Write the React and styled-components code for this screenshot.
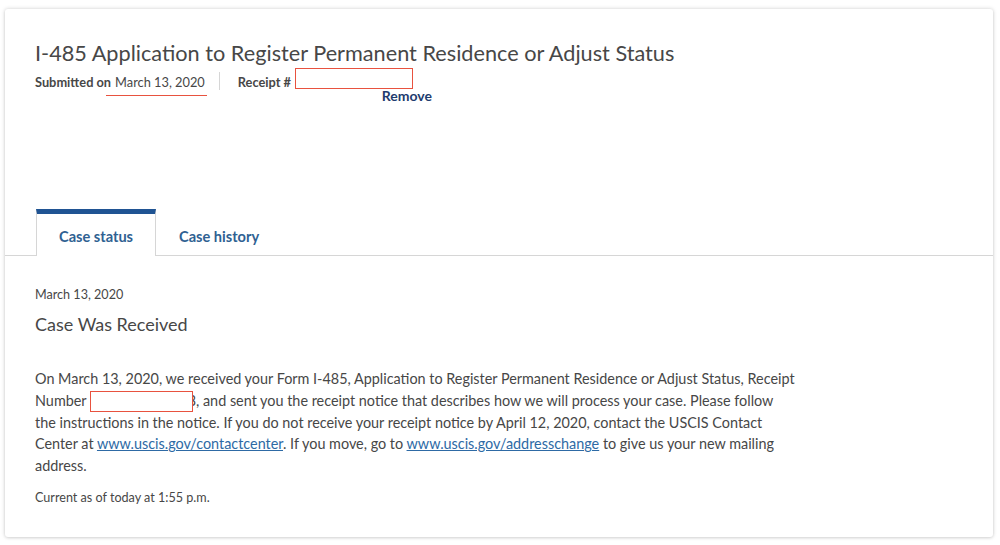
import styled, { createGlobalStyle } from "styled-components";

const GlobalStyle = createGlobalStyle`
  html, body {
    margin: 0;
    padding: 0;
    background: #ffffff;
  }
  body {
    font-family: Lato, "Noto Sans", sans-serif;
    color: #474747;
  }
`;

const Page = styled.div`
  padding: 9px 7px 8px 5px;
`;

const Card = styled.div`
  height: 528px;
  box-sizing: border-box;
  background: #fff;
  border-radius: 3px;
  box-shadow: 0 0 4px rgba(0, 0, 0, 0.18), 0 1px 3px rgba(0, 0, 0, 0.08);
  display: flex;
  flex-direction: column;
  overflow: hidden;
`;

const Header = styled.div`
  padding: 30px 30px 0 30px;
  height: 200px;
  box-sizing: border-box;
`;

const Title = styled.h1`
  margin: 0;
  font-size: 21.7px;
  font-weight: 400;
  line-height: 28px;
  color: #474747;
`;

const Meta = styled.div`
  display: flex;
  align-items: flex-start;
  margin-top: 5px;
  font-size: 12.8px;
  line-height: 20px;
`;

const MetaItem = styled.div`
  display: flex;
  align-items: center;
`;

const Label = styled.span`
  font-weight: 700;
  margin-right: 4px;
`;

const Marked = styled.span`
  position: relative;
  &::after {
    content: "";
    position: absolute;
    left: -9px;
    right: -2px;
    bottom: -4px;
    height: 1px;
    background: #e8523f;
  }
`;

const Divider = styled.span`
  width: 1px;
  height: 18px;
  background: #d6d6d6;
  margin: 0 18px 0 14px;
`;

const ReceiptBlock = styled.div`
  display: flex;
  flex-direction: column;
  align-items: flex-end;
`;

const ReceiptRow = styled.div`
  display: flex;
  align-items: center;
  height: 20px;
`;

const RedBox = styled.span`
  display: inline-block;
  box-sizing: border-box;
  width: ${(p) => p.$w}px;
  height: ${(p) => p.$h}px;
  margin-top: ${(p) => p.$mt || 0}px;
  border: 1px solid #e8523f;
  background: #fff;
  vertical-align: ${(p) => p.$va || "middle"};
`;

const RemoveButton = styled.button`
  border: 0;
  background: none;
  padding: 0;
  margin: -5px -19px 0 0;
  font-family: inherit;
  font-size: 14px;
  font-weight: 700;
  color: #1e3c6e;
  cursor: pointer;
`;

const TabBar = styled.div`
  display: flex;
  padding-left: 31px;
  border-bottom: 1px solid #d6d6d6;
`;

const Tab = styled.div`
  box-sizing: border-box;
  height: ${(p) => (p.$active ? "47px" : "46px")};
  padding: 3px 22px 0;
  display: flex;
  align-items: center;
  font-size: 14.6px;
  font-weight: 700;
  color: #2f6192;
  margin-bottom: ${(p) => (p.$active ? "-1px" : "0")};
  border-top: 5px solid ${(p) => (p.$active ? "#205493" : "transparent")};
  border-left: 1px solid ${(p) => (p.$active ? "#d6d6d6" : "transparent")};
  border-right: 1px solid ${(p) => (p.$active ? "#d6d6d6" : "transparent")};
  background: ${(p) => (p.$active ? "#fff" : "transparent")};
`;

const Content = styled.div`
  padding: 30px 30px 0 30px;
`;

const SmallText = styled.div`
  font-size: 12.6px;
  line-height: 18px;
  color: #474747;
`;

const StatusTitle = styled.h2`
  margin: 8px 0 0;
  font-size: 18px;
  font-weight: 400;
  line-height: 24px;
  color: #474747;
`;

const Paragraph = styled.p`
  margin: 32px 0 13px;
  max-width: 820px;
  font-size: 14.4px;
  line-height: 21.6px;
  color: #474747;
`;

const Link = styled.a`
  color: #2e6aa5;
  text-decoration: underline;
`;

const Tail = styled.span`
  display: inline-block;
  width: 3px;
  overflow: hidden;
  vertical-align: top;
  direction: rtl;
`;

export default function App() {
  return (
    <>
      <GlobalStyle />
      <Page>
        <Card>
          <Header>
            <Title>I-485 Application to Register Permanent Residence or Adjust Status</Title>
            <Meta>
              <MetaItem>
                <Label>Submitted on</Label>
                <Marked>March 13, 2020</Marked>
              </MetaItem>
              <Divider />
              <ReceiptBlock>
                <ReceiptRow>
                  <Label>Receipt #</Label>
                  <RedBox $w={118} $h={21} $mt={-7} />
                </ReceiptRow>
                <RemoveButton>Remove</RemoveButton>
              </ReceiptBlock>
            </Meta>
          </Header>
          <TabBar>
            <Tab $active>Case status</Tab>
            <Tab>Case history</Tab>
          </TabBar>
          <Content>
            <SmallText>March 13, 2020</SmallText>
            <StatusTitle>Case Was Received</StatusTitle>
            <Paragraph>
              On March 13, 2020, we received your Form I-485, Application to Register Permanent
              Residence or Adjust Status, Receipt
              <br />
              Number <RedBox $w={103} $h={21} $va="-6px" />
              <Tail>3</Tail>, and sent you the receipt notice that describes how we will process your
              case. Please follow
              <br />
              the instructions in the notice. If you do not receive your receipt notice by April 12,
              2020, contact the USCIS Contact
              <br />
              Center at <Link href="#">www.uscis.gov/contactcenter</Link>. If you move, go to{" "}
              <Link href="#">www.uscis.gov/addresschange</Link> to give us your new mailing
              <br />
              address.
            </Paragraph>
            <SmallText>Current as of today at 1:55 p.m.</SmallText>
          </Content>
        </Card>
      </Page>
    </>
  );
}
